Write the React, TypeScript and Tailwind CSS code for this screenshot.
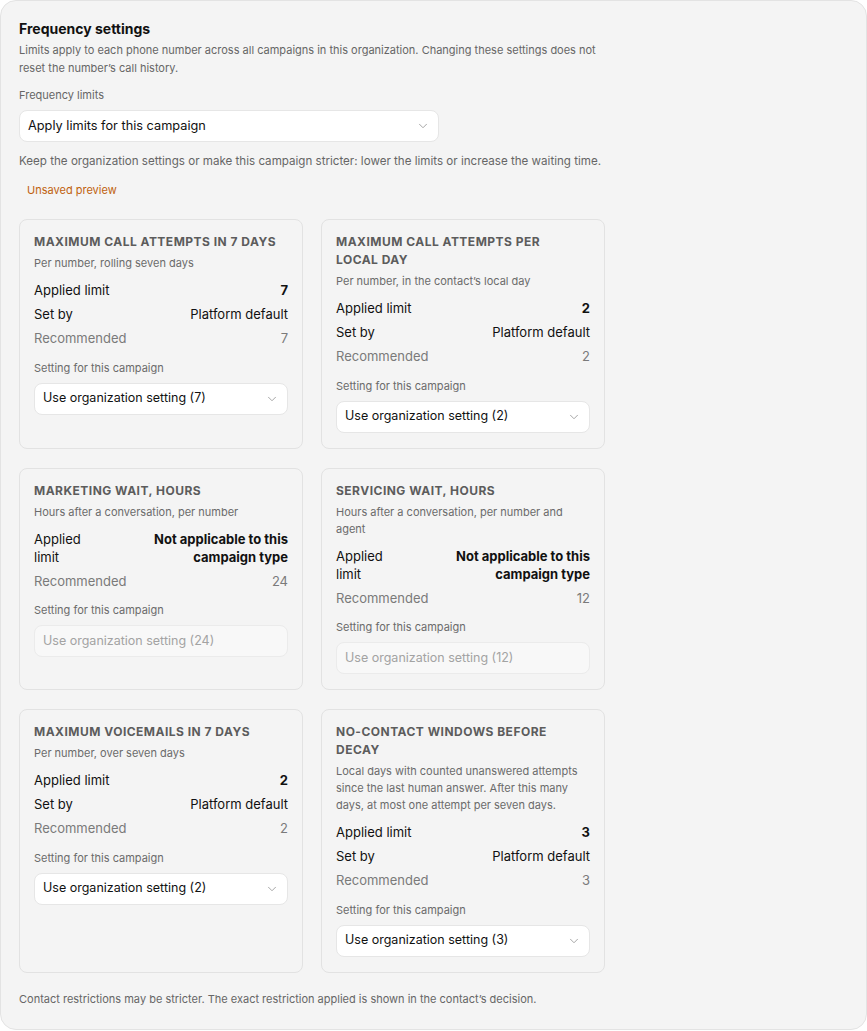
import { ChevronDown } from 'lucide-react';

type Row = { label: string; value: string; strong?: boolean; muted?: boolean };

type Limit = {
  title: string;
  hint: string;
  rows: Row[];
  setting: string;
  disabled?: boolean;
};

const limits: Limit[] = [
  {
    title: 'Maximum call attempts in 7 days',
    hint: 'Per number, rolling seven days',
    rows: [
      { label: 'Applied limit', value: '7', strong: true },
      { label: 'Set by', value: 'Platform default' },
      { label: 'Recommended', value: '7', muted: true },
    ],
    setting: 'Use organization setting (7)',
  },
  {
    title: 'Maximum call attempts per local day',
    hint: 'Per number, in the contact\u2019s local day',
    rows: [
      { label: 'Applied limit', value: '2', strong: true },
      { label: 'Set by', value: 'Platform default' },
      { label: 'Recommended', value: '2', muted: true },
    ],
    setting: 'Use organization setting (2)',
  },
  {
    title: 'Marketing wait, hours',
    hint: 'Hours after a conversation, per number',
    rows: [
      { label: 'Applied limit', value: 'Not applicable to this campaign type', strong: true },
      { label: 'Recommended', value: '24', muted: true },
    ],
    setting: 'Use organization setting (24)',
    disabled: true,
  },
  {
    title: 'Servicing wait, hours',
    hint: 'Hours after a conversation, per number and agent',
    rows: [
      { label: 'Applied limit', value: 'Not applicable to this campaign type', strong: true },
      { label: 'Recommended', value: '12', muted: true },
    ],
    setting: 'Use organization setting (12)',
    disabled: true,
  },
  {
    title: 'Maximum voicemails in 7 days',
    hint: 'Per number, over seven days',
    rows: [
      { label: 'Applied limit', value: '2', strong: true },
      { label: 'Set by', value: 'Platform default' },
      { label: 'Recommended', value: '2', muted: true },
    ],
    setting: 'Use organization setting (2)',
  },
  {
    title: 'No-contact windows before decay',
    hint: 'Local days with counted unanswered attempts since the last human answer. After this many days, at most one attempt per seven days.',
    rows: [
      { label: 'Applied limit', value: '3', strong: true },
      { label: 'Set by', value: 'Platform default' },
      { label: 'Recommended', value: '3', muted: true },
    ],
    setting: 'Use organization setting (3)',
  },
];

function SelectBox({ value, disabled, className = '' }: { value: string; disabled?: boolean; className?: string }) {
  if (disabled) {
    return (
      <div className={`h-8 flex items-center pl-2 rounded-lg border border-[#ebebeb] bg-[#f8f8f8] text-[12.5px] text-[#a3a3a3] ${className}`}>
        {value}
      </div>
    );
  }
  return (
    <div className={`h-8 flex items-center justify-between pl-2 pr-2 rounded-lg border border-[#e6e6e6] bg-white text-[#111] ${className}`}>
      <span>{value}</span>
      <ChevronDown className="w-3.5 h-3.5 text-[#999]" strokeWidth={1.5} />
    </div>
  );
}

function LimitCard({ item }: { item: Limit }) {
  return (
    <div className="rounded-lg border border-[#e2e2e2] bg-[#f4f4f4] px-[14px] pt-[13px] pb-[15px]">
      <h3 className="pr-2 text-[12px] leading-[18px] font-bold uppercase tracking-[0.04em] text-[#5c5c5c]">{item.title}</h3>
      <p className="mt-1 text-[11px] leading-[17px] text-[#6b6b6b]">{item.hint}</p>
      <div className="mt-[9px] flex flex-col gap-[6px]">
        {item.rows.map((row) => (
          <div key={row.label} className="flex justify-between gap-3 text-[13px] leading-[18px]">
            <span className={row.muted ? 'text-[#7a7a7a]' : 'text-[#111]'}>{row.label}</span>
            <span className={`text-right ${row.strong ? 'font-bold text-[#111]' : row.muted ? 'text-[#7a7a7a]' : 'text-[#111]'}`}>
              {row.value}
            </span>
          </div>
        ))}
      </div>
      <p className="mt-[12.5px] text-[11px] leading-[16px] text-[#6b6b6b]">Setting for this campaign</p>
      <SelectBox value={item.setting} disabled={item.disabled} className="mt-[7px] text-[12.5px]" />
    </div>
  );
}

export default function App() {
  return (
    <div className="bg-white min-h-screen" style={{ fontFamily: 'Inter, "Noto Sans", sans-serif' }}>
      <div className="rounded-2xl border border-[#e3e3e3] bg-[#f4f4f4] px-[18px] pt-[17px] pb-[22px]">
        <h2 className="text-[14px] leading-[22px] font-bold text-[#111]">Frequency settings</h2>
        <p className="mt-[1px] max-w-[600px] text-[11px] leading-[18px] text-[#666]">
          Limits apply to each phone number across all campaigns in this organization. Changing these settings does not reset the number&rsquo;s call history.
        </p>
        <p className="mt-[10px] text-[11px] leading-[16px] text-[#666]">Frequency limits</p>
        <SelectBox value="Apply limits for this campaign" className="mt-[7px] w-[420px] text-[12.75px]" />
        <p className="mt-[11px] max-w-[600px] text-[11.6px] leading-[16px] text-[#666]">
          Keep the organization settings or make this campaign stricter: lower the limits or increase the waiting time.
        </p>
        <p className="mt-[13px] px-2 text-[11px] leading-[16px] text-[#c0620e]">Unsaved preview</p>
        <div className="mt-[21px] grid grid-cols-2 gap-x-[18px] gap-y-[19px] w-[586px]">
          {limits.map((item) => (
            <LimitCard key={item.title} item={item} />
          ))}
        </div>
        <p className="mt-[18px] text-[11px] leading-[16px] text-[#666]">
          Contact restrictions may be stricter. The exact restriction applied is shown in the contact&rsquo;s decision.
        </p>
      </div>
    </div>
  );
}
